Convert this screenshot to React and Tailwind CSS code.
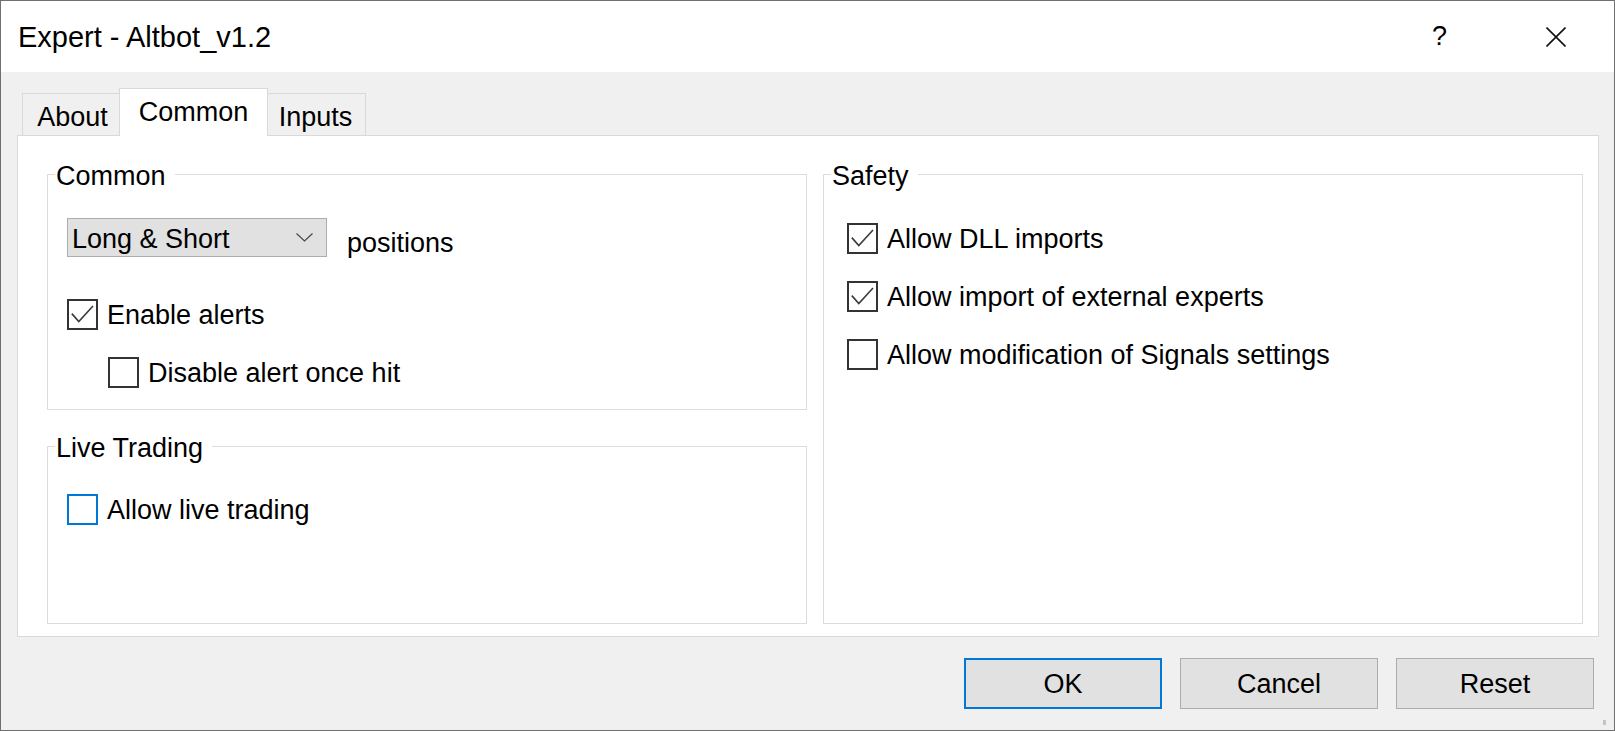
import React from 'react';

const CheckBox = ({ checked, focused }) => (
  <div
    className={`w-[31px] h-[31px] shrink-0 border-2 bg-white ${
      focused ? 'border-[#0078d7]' : 'border-[#333333]'
    }`}
  >
    {checked && (
      <svg width="27" height="27" viewBox="0 0 27 27" fill="none">
        <path d="M2.8 12.6 L9.8 20.6 L24 5" stroke="#3a3a3a" strokeWidth="1.6" />
      </svg>
    )}
  </div>
);

const CheckRow = ({ label, checked, focused, className = '' }) => (
  <div className={`flex items-center gap-[9px] ${className}`}>
    <CheckBox checked={checked} focused={focused} />
    <span className="leading-none pt-[2px]">{label}</span>
  </div>
);

const Group = ({ title, className = '', children }) => (
  <div className={`relative border border-[#dcdcdc] ${className}`}>
    <span className="absolute -top-[12px] left-[7px] bg-white pl-[1px] pr-[9px] leading-none">
      {title}
    </span>
    {children}
  </div>
);

const Button = ({ children, primary }) => (
  <button
    className={`w-[198px] h-[51px] bg-[#e1e1e1] flex items-center justify-center leading-none pt-[2px] ${
      primary ? 'border-2 border-[#0078d7]' : 'border border-[#adadad]'
    }`}
  >
    {children}
  </button>
);

export default function App() {
  return (
    <div className="relative w-[1615px] h-[731px] flex flex-col border border-[#707070] bg-[#f0f0f0] text-black text-[27px] font-['Liberation_Sans',Arial,sans-serif] overflow-hidden">
      {/* Title bar */}
      <div className="h-[71px] shrink-0 bg-white flex items-center pl-[17px] pr-[48px]">
        <span className="text-[29px] leading-none pt-[2px]">Expert - Altbot_v1.2</span>
        <span className="ml-auto mr-[99px] leading-none text-[27px]">?</span>
        <svg width="20" height="20" viewBox="0 0 20 20" fill="none">
          <path d="M0.5 0.5 L19.5 19.5 M19.5 0.5 L0.5 19.5" stroke="#111" strokeWidth="1.6" />
        </svg>
      </div>

      {/* Body */}
      <div className="flex-1 flex flex-col pt-[16px] pl-[16px] pr-[15px] pb-[21px]">
        {/* Tabs */}
        <div className="flex items-end pl-[5px] relative z-10">
          <div className="w-[97px] h-[42px] border-l border-t border-[#d9d9d9] bg-[#f0f0f0] flex items-center justify-center pt-[6px] pl-[3px] leading-none">
            About
          </div>
          <div className="w-[149px] h-[48px] -mb-px border-l border-t border-r border-[#d9d9d9] bg-white flex items-center justify-center leading-none">
            Common
          </div>
          <div className="w-[98px] h-[42px] border-t border-r border-[#d9d9d9] bg-[#f0f0f0] flex items-center justify-center pt-[6px] pr-[2px] leading-none">
            Inputs
          </div>
        </div>

        {/* Panel */}
        <div className="h-[502px] shrink-0 bg-white border border-[#d9d9d9] flex gap-[16px] pt-[38px] pb-[12px] pl-[29px] pr-[15px]">
          <div className="w-[760px] flex flex-col gap-[36px]">
            <Group title="Common" className="h-[236px] pl-[19px] pt-[43px]">
              <div className="flex items-center">
                <div className="w-[260px] h-[39px] bg-[#e1e1e1] border border-[#adadad] flex items-center pl-[4px] pr-[13px] leading-none">
                  <span className="pt-[4px]">Long &amp; Short</span>
                  <svg className="ml-auto" width="17" height="9" viewBox="0 0 17 9" fill="none">
                    <path d="M0.5 0.5 L8.5 8 L16.5 0.5" stroke="#444" strokeWidth="1.1" />
                  </svg>
                </div>
                <span className="ml-[20px] mt-[12px] leading-none">positions</span>
              </div>
              <CheckRow className="mt-[42px]" label="Enable alerts" checked />
              <CheckRow className="mt-[27px] ml-[41px]" label="Disable alert once hit" />
            </Group>
            <Group title="Live Trading" className="flex-1 pl-[19px] pt-[47px]">
              <CheckRow label="Allow live trading" focused />
            </Group>
          </div>
          <Group title="Safety" className="w-[760px] pl-[23px] pt-[48px]">
            <div className="flex flex-col gap-[27px]">
              <CheckRow label="Allow DLL imports" checked />
              <CheckRow label="Allow import of external experts" checked />
              <CheckRow label="Allow modification of Signals settings" />
            </div>
          </Group>
        </div>

        {/* Buttons */}
        <div className="mt-[21px] flex justify-end gap-[18px] pr-[5px]">
          <Button primary>OK</Button>
          <Button>Cancel</Button>
          <Button>Reset</Button>
        </div>
      </div>

      <span className="absolute right-[8px] bottom-[5px] w-[3px] h-[5px] bg-[#c4c4c4]" />
    </div>
  );
}
